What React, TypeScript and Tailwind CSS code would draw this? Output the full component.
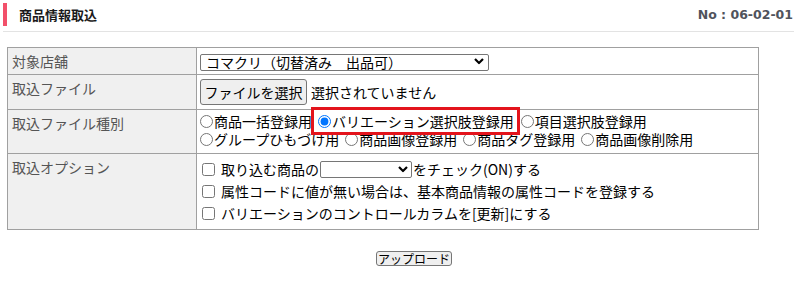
import React from "react";

const Chevron = ({ right = 5 }: { right?: number }) => (
  <svg
    width="10"
    height="7"
    viewBox="0 0 10 7"
    className="pointer-events-none absolute top-1/2 -translate-y-1/2"
    style={{ right }}
  >
    <path d="M1 1.5 L5 5.5 L9 1.5" fill="none" stroke="#000" strokeWidth="2.2" />
  </svg>
);

const Radio = ({ label, checked = false, first = false }: { label: string; checked?: boolean; first?: boolean }) => (
  <label className={`inline-flex h-[18px] items-center whitespace-nowrap leading-[18px] ${first ? "" : "ml-[6px]"}`}>
    <input
      type="radio"
      name="kind"
      defaultChecked={checked}
      className="m-0 h-[13px] w-[13px] accent-[#0075ff]"
    />
    <span className="ml-[1px]">{label}</span>
  </label>
);

const Check = ({ children }: { children: React.ReactNode }) => (
  <div className="flex h-[22px] items-center whitespace-nowrap">
    <input type="checkbox" className="m-0 ml-[5px] mr-[6px] h-[13px] w-[13px]" />
    {children}
  </div>
);

export default function App() {
  return (
    <div className="min-h-[283px] w-[794px] bg-white font-['Noto_Sans_CJK_JP','Noto_Sans',sans-serif] text-[14px] text-[#222]">
      {/* header */}
      <div className="ml-[3px] flex h-[32px] items-start justify-between border-b border-[#e3e3e3] pt-[3px]">
        <div className="flex items-center">
          <div className="h-[23px] w-[4px] bg-[#f2506a]" />
          <div className="ml-[12px] text-[13px] font-bold leading-[23px] text-[#1a1a1a]">商品情報取込</div>
        </div>
        <div className="pr-[1px] font-['DejaVu_Sans',sans-serif] text-[12.5px] font-bold leading-[23px] text-[#50535c]">
          No : 06-02-01
        </div>
      </div>

      {/* table */}
      <div className="ml-[7px] mt-[15px] w-[752px] border-l border-t border-[#a0a0a0]">
        <div className="grid grid-cols-[189px_562px]">
          {/* row 1 */}
          <div className="h-[27px] border-b border-r border-[#a0a0a0] bg-[#f0f0f0] pl-[4px] pt-[3px] leading-[20px] text-[#555]">
            対象店舗
          </div>
          <div className="h-[27px] border-b border-r border-[#a0a0a0] pl-[3px] pt-[4px]">
            <div className="relative h-[17px] w-[289px]">
              <select className="h-full w-full appearance-none rounded-[2px] border border-[#767676] bg-white pl-[5px] text-[14px] leading-[15px] text-black">
                <option>コマクリ（切替済み　出品可）</option>
              </select>
              <Chevron />
            </div>
          </div>

          {/* row 2 */}
          <div className="h-[35px] border-b border-r border-[#a0a0a0] bg-[#f0f0f0] pl-[4px] pt-[3px] leading-[20px] text-[#555]">
            取込ファイル
          </div>
          <div className="flex h-[35px] items-start border-b border-r border-[#a0a0a0] pl-[3px] pt-[4px]">
            <button className="h-[26px] w-[107px] rounded-[3px] border border-[#767676] bg-[#efefef] text-[14px] leading-[24px] text-black">
              ファイルを選択
            </button>
            <span className="ml-[4px] leading-[26px] text-black">選択されていません</span>
          </div>

          {/* row 3 */}
          <div className="h-[44px] border-b border-r border-[#a0a0a0] bg-[#f0f0f0] pl-[4px] pt-[3px] leading-[20px] text-[#555]">
            取込ファイル種別
          </div>
          <div className="h-[44px] border-b border-r border-[#a0a0a0] pl-[3px] pt-[2px] leading-[18px] text-black">
            <div className="flex h-[18px] items-center">
              <Radio label="商品一括登録用" first />
              <span className="relative ml-[6px] inline-flex">
                <Radio label="バリエーション選択肢登録用" checked first />
                <span className="pointer-events-none absolute -bottom-[5px] -left-[7px] -right-[6px] -top-[5px] border-[3px] border-[#e3141c]" />
              </span>
              <span className="ml-[7px] inline-flex">
                <Radio label="項目選択肢登録用" first />
              </span>
            </div>
            <div className="flex h-[18px] items-center">
              <Radio label="グループひもづけ用" first />
              <Radio label="商品画像登録用" />
              <Radio label="商品タグ登録用" />
              <Radio label="商品画像削除用" />
            </div>
          </div>

          {/* row 4 */}
          <div className="h-[76px] border-b border-r border-[#a0a0a0] bg-[#f0f0f0] pl-[4px] pt-[3px] leading-[20px] text-[#555]">
            取込オプション
          </div>
          <div className="h-[76px] border-b border-r border-[#a0a0a0] pt-[4px] text-black">
            <Check>
              <span>取り込む商品の</span>
              <span className="relative ml-[1px] inline-block h-[17px] w-[92px]">
                <select className="h-full w-full appearance-none rounded-[2px] border border-[#767676] bg-white" />
                <Chevron right={4} />
              </span>
              <span className="ml-[1px]">をチェック(ON)する</span>
            </Check>
            <Check>
              <span>属性コードに値が無い場合は、基本商品情報の属性コードを登録する</span>
            </Check>
            <Check>
              <span>バリエーションのコントロールカラムを[更新]にする</span>
            </Check>
          </div>
        </div>
      </div>

      {/* upload */}
      <div className="ml-[376px] mt-[18px]">
        <button className="h-[15px] w-[76px] rounded-[3px] border border-[#767676] bg-[#efefef] text-[12px] leading-[13px] text-black">
          アップロード
        </button>
      </div>
    </div>
  );
}
